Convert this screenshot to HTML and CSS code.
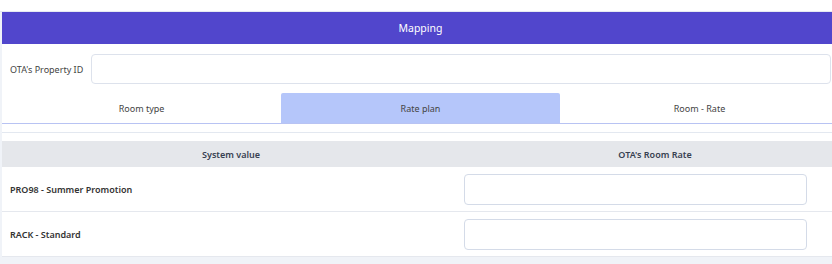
FILE: index.html
```html
<!DOCTYPE html>
<html lang="en">

<head>
    <meta charset="UTF-8">
    <meta name="viewport" content="width=device-width, initial-scale=1.0">
    <title>Mapping</title>
    <link rel="stylesheet" href="styles.css">
</head>

<body>
    <div class="topbar"></div>
    <div class="page">
        <div class="card">
            <div class="card-header">Mapping</div>

            <div class="property-row">
                <label for="propertyId">OTA's Property ID</label>
                <input type="text" id="propertyId">
            </div>

            <div class="tabs">
                <div class="tab">Room type</div>
                <div class="tab active">Rate plan</div>
                <div class="tab">Room - Rate</div>
            </div>

            <div class="tab-content">
                <table class="map-table">
                    <thead>
                        <tr>
                            <th class="col-system">System value</th>
                            <th class="col-ota">OTA's Room Rate</th>
                        </tr>
                    </thead>
                    <tbody>
                        <tr>
                            <td>PRO98 - Summer Promotion</td>
                            <td><input type="text" class="rate-input"></td>
                        </tr>
                        <tr>
                            <td>RACK - Standard</td>
                            <td><input type="text" class="rate-input"></td>
                        </tr>
                    </tbody>
                </table>
            </div>
        </div>
    </div>
</body>
</html>
```

FILE: styles.css
```css
html,
body {
    overflow: hidden;
}

body {
    font-family: 'Noto Sans', 'Open Sans', sans-serif;
    font-size: 9px;
    color: #333;
    margin: 0;
    padding: 0;
    background-color: #f0f3f8;
    height: 264px;
}

.topbar {
    height: 11px;
    background-color: #fff;
    border-bottom: 1px solid #e6eaf1;
}

.page {
    padding-left: 2px;
}

.card {
    width: 837px;
    background-color: #fff;
}

.card-header {
    height: 32px;
    display: flex;
    align-items: center;
    justify-content: center;
    background-color: #5146cc;
    color: #fff;
    font-size: 10.5px;
}

.property-row {
    display: flex;
    align-items: center;
    gap: 8px;
    padding: 10px 8px 9px 8px;
}

.property-row label {
    white-space: nowrap;
    color: #444;
}

.property-row input {
    flex: 1;
    height: 30px;
    box-sizing: border-box;
    border: 1px solid #dde2ec;
    border-radius: 4px;
}

.tabs {
    display: grid;
    grid-template-columns: 279px 279px 279px;
    border-bottom: 1px solid #b8c3f3;
}

.tab {
    height: 30px;
    display: flex;
    align-items: center;
    justify-content: center;
    color: #444;
}

.tab.active {
    background-color: #b5c6fa;
    border-radius: 2px 2px 0 0;
}

.tab-content {
    margin-top: 8px;
    border-top: 1px solid #e3e8f0;
    padding-top: 8px;
}

.map-table {
    width: 848px;
    border-collapse: collapse;
    table-layout: fixed;
}

.map-table th {
    height: 26px;
    padding: 0;
    background-color: #e5e7eb;
    font-weight: 600;
    color: #374151;
}

.col-system {
    width: 458px;
}

.map-table td {
    height: 44px;
    padding: 0 8px;
    border-bottom: 1px solid #e5e8ee;
    font-weight: 600;
    color: #333;
}

.map-table td:last-child {
    padding-left: 4px;
}

.rate-input {
    display: block;
    width: 343px;
    height: 31px;
    box-sizing: border-box;
    border: 1px solid #d4dbe8;
    border-radius: 4px;
}
```
